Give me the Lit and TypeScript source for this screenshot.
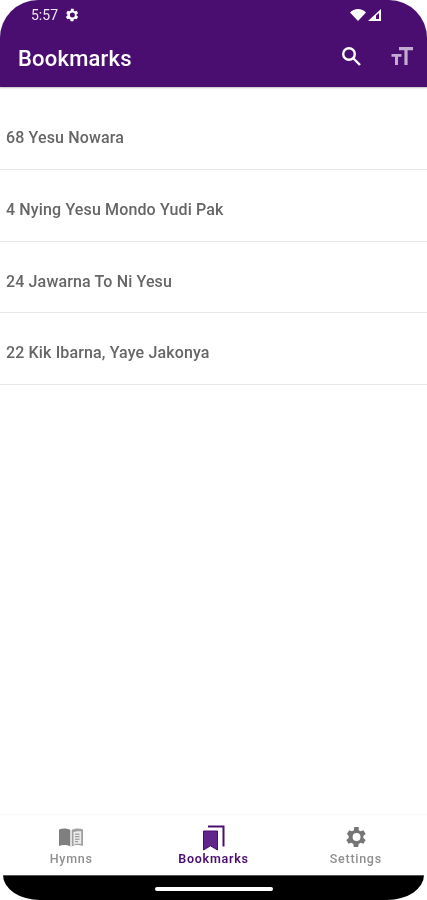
import { LitElement, html, css } from "lit";
import { customElement } from "lit/decorators.js";

const ITEMS = ["68 Yesu Nowara", "4 Nying Yesu Mondo Yudi Pak", "24 Jawarna To Ni Yesu", "22 Kik Ibarna, Yaye Jakonya"];
const GEAR = "M19.4 13a7.500 7.500 0 0 0 0-2l2.100-1.600-2-3.500-2.500 1a7 7 0 0 0-1.700-1L15.400 3.200h-4l-.4 2.700a7 7 0 0 0-1.700 1l-2.500-1-2 3.500L6.400 11a7.500 7.500 0 0 0 0 2l-2.100 1.600 2 3.500 2.500-1a7 7 0 0 0 1.700 1l.4 2.700h4l.4-2.700a7 7 0 0 0 1.700-1l2.500 1 2-3.500zM13.400 15.500a3.500 3.500 0 1 1 0-7 3.500 3.500 0 0 1 0 7z";

@customElement("app-root")
export class AppRoot extends LitElement {
  static styles = css`
    :host { display: block; width: 427px; height: 900px; background: #fff; font-family: Roboto, "Noto Sans", sans-serif; overflow: hidden; }
    .page { display: flex; flex-direction: column; height: 900px; filter: blur(0.45px); }
    .head { background: #4a0e71; border-radius: 38px 38px 0 0; height: 87px; flex: none; color: #fff; display: flex; flex-direction: column; box-shadow: 0 1px 2px rgba(0,0,0,.25); }
    .status { height: 30px; display: flex; align-items: center; padding: 0 44px 0 31px; justify-content: space-between; font-size: 14px; color: #f0e8f4; }
    .status .l { display: flex; align-items: center; gap: 7px; }
    .status .r { display: flex; align-items: center; gap: 1px; }
    .bar { flex: 1; display: flex; align-items: center; padding: 0 13px 6px 18px; }
    .title { font-size: 22px; font-weight: 500; letter-spacing: .2px; flex: 1; padding-top: 5px; }
    .icons { display: flex; align-items: center; gap: 27px; }
    .list { flex: 1; padding-top: 11.5px; }
    .row { height: 71.67px; box-sizing: border-box; border-bottom: 1px solid #e8e8e8; display: flex; align-items: center; padding: 8px 0 0 6px; font-size: 16px; font-weight: 500; letter-spacing: .14px; color: #666; }
    .nav { height: 61px; flex: none; display: grid; grid-template-columns: repeat(3, 1fr); background: #fff; border-top: 1px solid #f8f8f8; box-sizing: border-box; }
    .tab { display: flex; flex-direction: column; align-items: center; padding-top: 8px; font-size: 12.5px; color: #8f8f8f; font-weight: 500; letter-spacing: .72px; }
    .tab.on { color: #4a0e71; font-weight: 600; }
    .ic { height: 28px; display: flex; align-items: center; justify-content: center; }
    .lab { line-height: 15px; }
    .gesture { height: 25px; flex: none; background: #000; border-radius: 0 0 37px 37px / 0 0 25px 25px; margin: 0 3px; display: flex; justify-content: center; align-items: center; border-top: 1px solid #555; box-sizing: border-box; }
    .pill { width: 118px; height: 4px; border-radius: 2px; background: #fff; margin-top: 1px; }
    svg { display: block; }
  `;

  render() {
    return html`<div class="page">
      <div class="head">
        <div class="status">
          <div class="l"><span>5:57</span>
            <svg width="14" height="14" viewBox="3.400 2.200 19 19.600" fill="#fff"><path fill-rule="evenodd" d=${GEAR}/></svg>
          </div>
          <div class="r">
            <svg width="16" height="14" viewBox="0 0 16 14" fill="#fff"><path d="M0 4.500C2 2.500 5 1 8 1s6 1.500 8 3.500L8 13z"/></svg>
            <svg width="16" height="14" viewBox="0 0 16 14"><path d="M1 13 14 1v12z" fill="#fff"/><path d="M9 7.500 12 5v6H9z" fill="#4a0e71"/></svg>
          </div>
        </div>
        <div class="bar">
          <div class="title">Bookmarks</div>
          <div class="icons">
            <svg width="24" height="24" viewBox="0 0 24 24" fill="none" stroke="#fff" stroke-width="2.400"><circle cx="10" cy="10" r="5.800"/><path d="m14.500 14.500 6.500 6.500"/></svg>
            <svg width="24" height="24" viewBox="0 0 24 24" fill="#c4abd3"><path d="M9 3h14v3.200h-5.400V21h-3.200V6.200H9zM1.500 10h10v2.800H8V21H5v-8.200H1.500z"/></svg>
          </div>
        </div>
      </div>
      <div class="list">${ITEMS.map((t) => html`<div class="row">${t}</div>`)}</div>
      <div class="nav">
        <div class="tab">
          <div class="ic"><svg width="26" height="20" viewBox="0 0 26 20"><path d="M1 2.500c3.500-1.500 8-1.500 11.300.5v16.500c-3.300-1.800-7.800-1.800-11.300-.5z" fill="#7f7f7f"/><path d="M13.700 3c3.300-2 7.800-2 11.300-.5V19c-3.500-1.300-8-1.300-11.300.5z" fill="#a0a0a0"/><path d="M15.500 5.200c2-1 5-1.300 7.700-.9v12.700c-2.700-.4-5.700-.1-7.700.9z" fill="#ececec"/><path d="M17 7.200h4.500M17 9.700h4.500M17 12.200h4.500M17 14.700h3" stroke="#888" stroke-width="1"/></svg></div>
          <span class="lab">Hymns</span>
        </div>
        <div class="tab on">
          <div class="ic"><svg width="24" height="27" viewBox="0 0 24 27"><path d="M7 2.500h15.500v20" fill="none" stroke="#4a0e71" stroke-width="2"/><path d="M2.500 7h14v19l-7-4.200-7 4.200z" fill="#61258c" stroke="#4a0e71" stroke-width="1"/></svg></div>
          <span class="lab">Bookmarks</span>
        </div>
        <div class="tab">
          <div class="ic"><svg width="22" height="22" viewBox="3.400 2.200 19 19.600" fill="#757575"><path fill-rule="evenodd" d=${GEAR}/></svg></div>
          <span class="lab">Settings</span>
        </div>
      </div>
      <div class="gesture"><div class="pill"></div></div>
    </div>`;
  }
}
